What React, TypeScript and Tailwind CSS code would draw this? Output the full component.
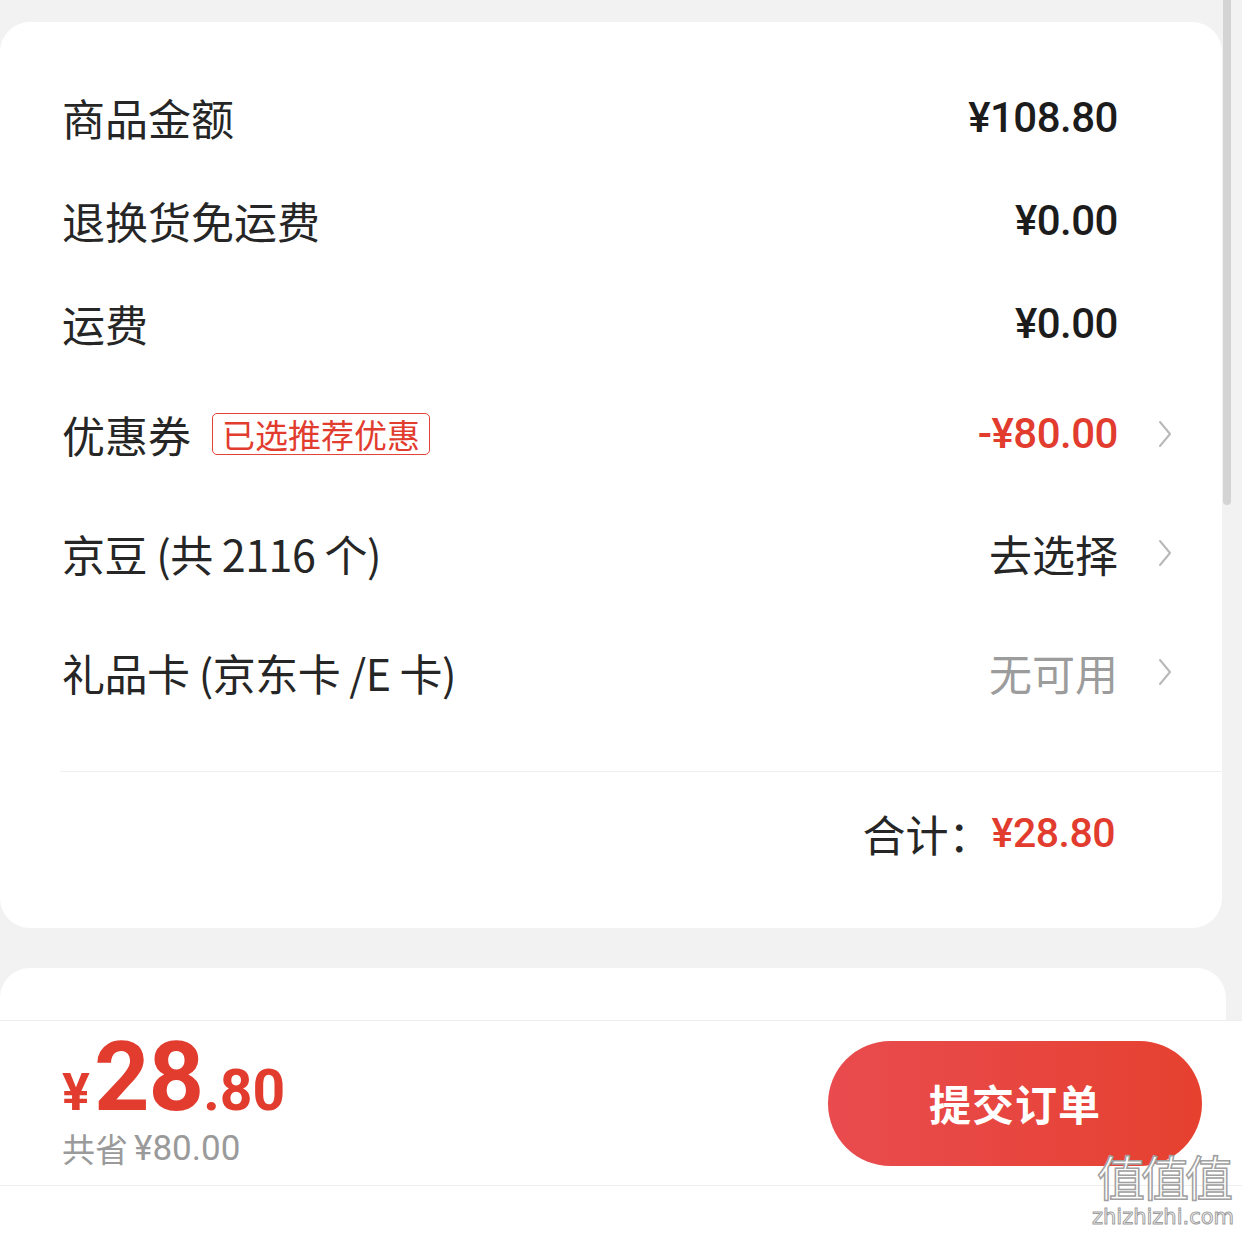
import React from "react";

const CJK = "font-['Noto_Sans_CJK_SC','Noto_Sans',sans-serif]";
const NUM = "font-['Roboto','Noto_Sans_CJK_SC',sans-serif]";

function Chevron() {
  return (
    <svg width="14" height="30" viewBox="0 0 14 30" fill="none">
      <polyline points="2,3 12,15 2,27" stroke="#b8b8b8" strokeWidth="2" strokeLinecap="round" strokeLinejoin="round" />
    </svg>
  );
}

function Row({
  h,
  label,
  value,
  chevron,
}: {
  h: string;
  label: React.ReactNode;
  value: React.ReactNode;
  chevron?: boolean;
}) {
  return (
    <div className={`flex items-center pl-[62px] ${h}`}>
      <div className="flex-1 flex items-center">{label}</div>
      <div className="flex items-center justify-end">{value}</div>
      <div className="w-[104px] flex items-center pl-[40px]">{chevron ? <Chevron /> : null}</div>
    </div>
  );
}

export default function App() {
  const labelCls = `${CJK} text-[43px] leading-none text-[#262626]`;
  const numCls = `${NUM} text-[42px] leading-none font-medium text-[#1c1c1c] tracking-[-0.5px]`;
  return (
    <div className="relative w-[1242px] h-[1234px] bg-[#f2f2f2] overflow-hidden">
      {/* main card */}
      <div className="w-[1222px] mt-[22px] bg-white rounded-[30px] pt-[44px] pb-[34px]">
        <Row h="h-[103px]" label={<span className={labelCls}>商品金额</span>} value={<span className={numCls}>¥108.80</span>} />
        <Row h="h-[103px]" label={<span className={labelCls}>退换货免运费</span>} value={<span className={numCls}>¥0.00</span>} />
        <Row h="h-[103px]" label={<span className={labelCls}>运费</span>} value={<span className={numCls}>¥0.00</span>} />
        <Row
          h="h-[118px]"
          label={
            <div className="flex items-center gap-[21px]">
              <span className={labelCls}>优惠券</span>
              <span className={`${CJK} h-[42px] px-[9px] flex items-center border-[1.5px] border-[#e34234] rounded-[5px] text-[33px] leading-none text-[#e23c2f]`}>
                已选推荐优惠
              </span>
            </div>
          }
          value={<span className={`${NUM} text-[42px] leading-none font-medium text-[#e23c2f] tracking-[-0.5px]`}>-¥80.00</span>}
          chevron
        />
        <Row
          h="h-[120px]"
          label={<span className={`${labelCls} tracking-[-0.5px]`}>京豆 (共 2116 个)</span>}
          value={<span className={labelCls}>去选择</span>}
          chevron
        />
        <Row
          h="h-[118px]"
          label={<span className={`${labelCls} tracking-[-0.5px]`}>礼品卡 (京东卡 /E 卡)</span>}
          value={<span className={`${CJK} text-[43px] leading-none text-[#9c9c9c]`}>无可用</span>}
          chevron
        />
        <div className="h-[40px]" />
        <div className="ml-[60px] h-[1px] bg-[#efefef]" />
        <div className="h-[122px] flex items-center justify-end pr-[107px]">
          <span className={`${CJK} text-[43px] leading-none text-[#262626]`}>合计：</span>
          <span className={`${NUM} text-[41px] leading-none font-medium text-[#e23c2f] tracking-[-0.5px]`}>¥28.80</span>
        </div>
      </div>

      {/* second card top */}
      <div className="w-[1226px] mt-[40px] h-[52px] bg-white rounded-t-[30px]" />

      {/* bottom bar */}
      <div className="h-[166px] bg-white border-y border-[#eeeeee] flex items-center justify-between pl-[62px] pr-[40px]">
        <div className="self-start pt-[8px] flex flex-col">
          <div className={`${NUM} h-[97px] flex items-baseline text-[#e23c2f] font-bold leading-none`}>
            <span className="text-[52px] leading-none mr-[4px]">¥</span>
            <span className="text-[97px] leading-none tracking-[-1px]">28</span>
            <span className="text-[57px] leading-none">.80</span>
          </div>
          <div className="h-[38px] mt-[3px] flex items-center text-[#9a9a9a]">
            <span className={`${CJK} text-[33px] leading-none`}>共省</span>
            <span className={`${NUM} text-[35px] leading-none ml-[6px]`}>¥80.00</span>
          </div>
        </div>
        <button className="w-[374px] h-[125px] rounded-full bg-gradient-to-r from-[#e94b4e] to-[#e6412f] flex items-center justify-center">
          <span className={`${CJK} text-[42px] font-bold leading-none text-white tracking-[1px]`}>提交订单</span>
        </button>
      </div>
      <div className="h-[48px] bg-white" />

      {/* scrollbar */}
      <div className="absolute top-0 left-[1223px] w-[8px] h-[505px] bg-[#d4d4d4] rounded-b-full" />

      {/* watermark */}
      <div className="absolute right-[8px] bottom-[6px] flex flex-col items-center gap-[8px] text-white [-webkit-text-stroke:1.5px_#a0a0a0] pointer-events-none">
        <span className={`${CJK} text-[48px] leading-none tracking-[-4px]`}>值值值</span>
        <span className={`font-['DejaVu_Sans',sans-serif] text-[21px] leading-none [-webkit-text-stroke:1px_#a0a0a0]`}>zhizhizhi.com</span>
      </div>
    </div>
  );
}
